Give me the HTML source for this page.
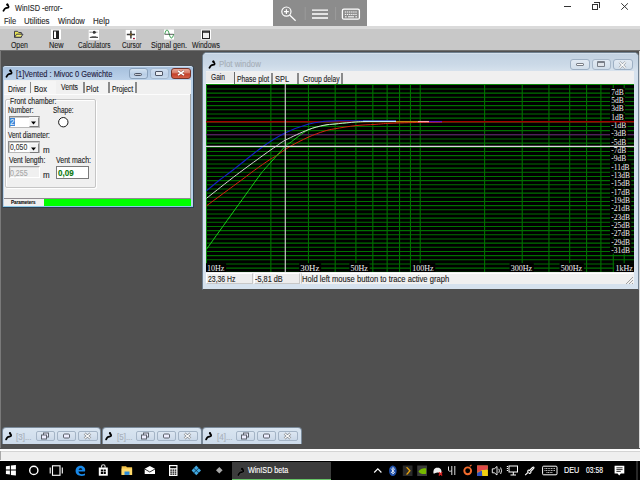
<!DOCTYPE html>
<html><head><meta charset="utf-8">
<style>
*{margin:0;padding:0;box-sizing:border-box}
html,body{width:640px;height:480px;overflow:hidden;background:#fff}
body{position:relative;font-family:"Liberation Sans",sans-serif;font-size:8px;color:#000}
.a{position:absolute}
.t{position:absolute;white-space:nowrap;line-height:1;font-size:8px;transform-origin:0 0;-webkit-text-stroke:0.12px currentColor}
.btn{position:absolute;border:1px solid #8fa3bb;border-radius:3px;background:linear-gradient(#e4edf6,#cbdaea)}
.sep{position:absolute;width:1.8px;background:#8a8a8a}
</style></head><body>
<!-- app title bar -->
<svg class="a" style="left:2px;top:3px" width="9" height="9" viewBox="0 0 9 9"><path d="M5.3 1.5 C5.6 2.5 7.2 3.2 6.4 4.3 C5.8 5 4.2 4.8 3.3 5.4 C2.5 6 2 7 1.5 7.8" stroke="#000" stroke-width="1.8" fill="none" stroke-linecap="round"/><circle cx="5.4" cy="1.7" r="1.15" fill="#000"/></svg>
<div class="t" style="font-size:8.5px;left:14.6px;top:4.0px;color:#2a2a2a;transform:scaleX(0.866)">WinISD -error-</div>
<div class="t" style="font-size:8.5px;left:3.7px;top:17.0px;color:#2a2a2a;transform:scaleX(0.885)">File</div>
<div class="t" style="font-size:8.5px;left:24px;top:17.0px;color:#2a2a2a;transform:scaleX(0.932)">Utilities</div>
<div class="t" style="font-size:8.5px;left:57.8px;top:17.0px;color:#2a2a2a;transform:scaleX(0.885)">Window</div>
<div class="t" style="font-size:8.5px;left:92.8px;top:17.0px;color:#2a2a2a;transform:scaleX(0.941)">Help</div>

<!-- window controls -->
<div class="a" style="left:564px;top:6px;width:7px;height:1px;background:#333"></div>
<div class="a" style="left:592px;top:4px;width:6px;height:6px;border:1px solid #333"></div>
<div class="a" style="left:594px;top:2px;width:6px;height:6px;border-top:1px solid #333;border-right:1px solid #333"></div>
<svg class="a" style="left:621px;top:3px" width="8" height="8"><path d="M0.3 0.3L6.9 6.7M6.9 0.3L0.3 6.7" stroke="#333" stroke-width="1"/></svg>

<!-- tablet overlay -->
<div class="a" style="left:273px;top:0;width:94px;height:26px;background:#8c8c8c"></div>
<svg class="a" style="left:273px;top:0" width="94" height="26">
 <circle cx="13.4" cy="11.6" r="4.6" stroke="#fff" stroke-width="1.2" fill="none"/>
 <path d="M11 11.6H15.8M13.4 9.2V14M16.6 15L22.6 20.8" stroke="#fff" stroke-width="1.2"/>
 <path d="M32.2 7V20M62.6 7V20" stroke="#9c9c9c" stroke-width="1"/>
 <path d="M39 10.2H55M39 14H55M39 18H55" stroke="#fff" stroke-width="1.3"/>
 <rect x="69.4" y="9.2" width="17" height="10" rx="1.5" stroke="#fff" stroke-width="1.3" fill="none"/>
 <path d="M71.8 12H84.2M71.8 14.4H84.2" stroke="#fff" stroke-width="1" stroke-dasharray="1.4 0.7"/>
 <path d="M72 16.8H73.6M75 16.8H81M82.4 16.8H84" stroke="#fff" stroke-width="1"/>
</svg>

<!-- toolbar -->
<div class="a" style="left:0;top:26px;width:640px;height:25px;background:#c8c8c8"></div>
<div class="a" style="left:0;top:26px;width:640px;height:3px;background:#dadada"></div>
<div class="a" style="left:0;top:50px;width:640px;height:1px;background:#6e6e6e"></div>
<svg class="a" style="left:0;top:0" width="230" height="42">
 <path d="M14.5 31.3h3l1.2 1.2h2.6v4.8h-6.8z" fill="#e8e450" stroke="#2c2c48" stroke-width="0.9"/>
 <path d="M14.6 37.2l2-3h6.4l-2 3z" fill="#f4f070" stroke="#2c2c48" stroke-width="0.9"/>
 <rect x="51" y="29.5" width="10" height="10" fill="#fff"/>
 <rect x="53.5" y="31" width="5" height="7.5" fill="#fff" stroke="#222" stroke-width="1"/>
 <rect x="56" y="31" width="2.5" height="7.5" fill="#222"/>
 <rect x="88.7" y="29.9" width="10.3" height="10" fill="#fff"/>
 <path d="M89.6 32.2H97.4" stroke="#555" stroke-width="0.9" stroke-dasharray="1.2 0.5"/>
 <circle cx="94.2" cy="32.2" r="1.5" fill="#333"/>
 <path d="M89.8 37.4H98" stroke="#444" stroke-width="1.1"/>
 <path d="M91.5 36.6H96.3" stroke="#666" stroke-width="0.9"/>
 <rect x="125.7" y="29.9" width="10.3" height="10" fill="#fff"/>
 <path d="M130.9 30.8V38.4M126.8 34.5H135" stroke="#3a3a3a" stroke-width="1.5"/>
 <circle cx="130.9" cy="34.5" r="1.2" fill="#6a5020"/>
 <rect x="133" y="37.9" width="1.9" height="1.3" fill="#a01838"/>
 <rect x="164" y="29.5" width="10" height="10" fill="#fff"/>
 <path d="M164.8 34C166.2 28.6 167.8 28.6 169.2 34S172.2 39.4 173.8 34" stroke="#3aa050" stroke-width="1" fill="none"/>
 <path d="M164.5 34.3H173.5" stroke="#333" stroke-width="0.8"/>
 <rect x="201" y="29.5" width="10" height="10" fill="#fff"/>
 <rect x="202.5" y="31" width="7" height="7.5" fill="#eee" stroke="#222" stroke-width="1"/>
 <path d="M202.5 32H209.5" stroke="#222" stroke-width="1.5"/>
</svg>
<div class="t" style="font-size:8.5px;left:10.9px;top:41.3px;color:#222;transform:scaleX(0.809)">Open</div>
<div class="t" style="font-size:8.5px;left:48.8px;top:41.3px;color:#222;transform:scaleX(0.856)">New</div>
<div class="t" style="font-size:8.5px;left:77.9px;top:41.3px;color:#222;transform:scaleX(0.762)">Calculators</div>
<div class="t" style="font-size:8.5px;left:121.6px;top:41.3px;color:#222;transform:scaleX(0.762)">Cursor</div>
<div class="t" style="font-size:8.5px;left:150.8px;top:41.3px;color:#222;transform:scaleX(0.847)">Signal gen.</div>
<div class="t" style="font-size:8.5px;left:192.2px;top:41.3px;color:#222;transform:scaleX(0.809)">Windows</div>

<!-- MDI area -->
<div class="a" style="left:0;top:51px;width:640px;height:397.5px;background:#505050"></div>
<div class="a" style="left:0;top:51px;width:1px;height:397px;background:#7a7a7a"></div>
<div class="a" style="left:638.5px;top:51px;width:1.5px;height:397px;background:#d8d8d8"></div>

<!-- child window [1]Vented -->
<div class="a" style="left:1.5px;top:64.5px;width:192.5px;height:143.5px;background:#b8d0e8;border:1px solid #2e3e4e;border-top-color:#484c50;border-left-color:#4a5a6a;border-radius:4px 4px 0 0"></div>
<div class="a" style="left:2.5px;top:65.5px;width:190.5px;height:14.5px;background:linear-gradient(#a6c0dd,#bcd2ea);border-radius:3px 3px 0 0;border-top:1px solid #d0e0f0"></div>
<div class="a" style="left:2.5px;top:205.5px;width:190.5px;height:1.5px;background:#8cc8e8"></div>
<div class="a" style="left:3.5px;top:80px;width:187.8px;height:125.5px;background:#f0f0f0"></div>
<svg class="a" style="left:4.5px;top:68.5px" width="9" height="9" viewBox="0 0 9 9"><path d="M5.3 1.5 C5.6 2.5 7.2 3.2 6.4 4.3 C5.8 5 4.2 4.8 3.3 5.4 C2.5 6 2 7 1.5 7.8" stroke="#000" stroke-width="1.8" fill="none" stroke-linecap="round"/><circle cx="5.4" cy="1.7" r="1.15" fill="#000"/></svg>
<div class="t" style="font-size:8.5px;left:16px;top:70.0px;color:#1e2040;transform:scaleX(0.875)">[1]Vented : Mivoc 0 Gewichte</div>
<div class="btn" style="left:128.5px;top:67.5px;width:19px;height:11px;border-color:#8aa2bc;background:linear-gradient(#d4e3f2,#bed2e8 50%,#b4cae4 51%,#c8daee)"></div>
<div class="btn" style="left:149.5px;top:67.5px;width:19px;height:11px;border-color:#a6bad0;background:linear-gradient(#d0dff0,#c2d4ea 50%,#bcd0e8 51%,#cadcee)"></div>
<div class="btn" style="left:170.5px;top:67.5px;width:20px;height:11px;border-color:#7a3428;background:linear-gradient(#eaa898 0%,#d8806c 40%,#c4402a 55%,#d46048 100%)"></div>
<div class="a" style="left:134px;top:72.5px;width:7.5px;height:3px;border:1px solid #4e5666;border-radius:1.5px;background:#c8ccd4"></div>
<div class="a" style="left:155px;top:70.5px;width:7.5px;height:5px;border:1px solid #4e5666;border-radius:1px;background:#e8ecf2;border-top-width:1.5px"></div>
<svg class="a" style="left:176.5px;top:70px" width="8" height="6"><path d="M1 0.8L7 5.2M7 0.8L1 5.2" stroke="#5a2a22" stroke-width="2.6" opacity=".5"/><path d="M1 0.8L7 5.2M7 0.8L1 5.2" stroke="#fff" stroke-width="1.6"/></svg>
<!-- tabs -->
<div class="a" style="left:4px;top:81px;width:26px;height:13px;background:#f3f3f3"></div>
<div class="a" style="left:31px;top:81px;width:24.5px;height:13px;background:#f5f5f5"></div>
<div class="a" style="left:85px;top:81px;width:23px;height:13px;background:#f3f3f3"></div>
<div class="a" style="left:110px;top:81px;width:25px;height:13px;background:#f3f3f3"></div>
<div class="sep" style="left:29.5px;top:81.5px;height:11.5px"></div>
<div class="sep" style="left:82.8px;top:81.5px;height:11.5px"></div>
<div class="sep" style="left:108px;top:81.5px;height:11.5px"></div>
<div class="sep" style="left:135px;top:81.5px;height:11.5px"></div>
<div class="t" style="font-size:8.5px;left:7.6px;top:84.5px;color:#222;transform:scaleX(0.800)">Driver</div>
<div class="t" style="font-size:8.5px;left:33.8px;top:84.5px;color:#222;transform:scaleX(0.885)">Box</div>
<div class="t" style="font-size:8.5px;left:60.5px;top:82.5px;color:#222;transform:scaleX(0.800)">Vents</div>
<div class="t" style="font-size:8.5px;left:85.9px;top:84.8px;color:#222;transform:scaleX(0.847)">Plot</div>
<div class="t" style="font-size:8.5px;left:112.4px;top:84.8px;color:#222;transform:scaleX(0.800)">Project</div>
<div class="a" style="left:3.5px;top:93.5px;width:187.5px;height:0.8px;background:#d8d8d8"></div>
<div class="a" style="left:3.5px;top:94.3px;width:187px;height:0.8px;background:#fcfcfc"></div>
<div class="a" style="left:190.2px;top:93.5px;width:1.1px;height:104px;background:#a4a4a4"></div>
<!-- group box -->
<div class="a" style="left:5px;top:99.3px;width:91px;height:88.8px;border:1px solid #c6c6c6;border-radius:2px;box-shadow:inset 1px 1px 0 #fff,1px 1px 0 #fff"></div>
<div class="a" style="left:10px;top:97px;width:46px;height:7px;background:#f0f0f0"></div>
<div class="t" style="font-size:8.5px;left:10.2px;top:96.8px;color:#222;transform:scaleX(0.807)">Front chamber:</div>
<div class="t" style="font-size:8.5px;left:7.8px;top:106.0px;color:#222;transform:scaleX(0.785)">Number:</div>
<div class="t" style="font-size:8.5px;left:53.2px;top:106.0px;color:#222;transform:scaleX(0.762)">Shape:</div>
<!-- combo 1 -->
<div class="a" style="left:8.5px;top:115.5px;width:31.5px;height:12px;background:#fff;border:1px solid;border-color:#8a8a8a #b8b8b8 #b8b8b8 #8a8a8a;box-shadow:inset 1px 1px 0 #c8c8c8"></div>
<div class="a" style="left:10px;top:117.5px;width:4.5px;height:8px;background:#3d86d8"></div>
<div class="t" style="font-size:8.5px;left:10px;top:117.8px;color:#dfeefe;transform:scaleX(0.941)">2</div>
<div class="a" style="left:28.5px;top:117px;width:10px;height:10px;background:#f2f2f2;border:1px solid;border-color:#f8f8f8 #8a8a8a #7a7a7a #f8f8f8"></div>
<svg class="a" style="left:31px;top:121px" width="6" height="4"><path d="M0 0.5H5L2.5 3.5z" fill="#000"/></svg>
<circle></circle>
<svg class="a" style="left:57px;top:115.5px" width="13" height="13"><circle cx="6.3" cy="6.2" r="4.7" fill="#fff" stroke="#1a1a1a" stroke-width="1"/></svg>
<div class="t" style="font-size:8.5px;left:8px;top:131.0px;color:#222;transform:scaleX(0.764)">Vent diameter:</div>
<!-- combo 2 -->
<div class="a" style="left:8px;top:141px;width:32px;height:11.5px;background:#fff;border:1px solid;border-color:#8a8a8a #b8b8b8 #b8b8b8 #8a8a8a;box-shadow:inset 1px 1px 0 #c8c8c8"></div>
<div class="t" style="font-size:8.5px;left:10.3px;top:143.3px;color:#333;transform:scaleX(0.809)">0,050</div>
<div class="a" style="left:28.5px;top:142.5px;width:10px;height:10px;background:#f2f2f2;border:1px solid;border-color:#f8f8f8 #8a8a8a #7a7a7a #f8f8f8"></div>
<svg class="a" style="left:31px;top:146.5px" width="6" height="4"><path d="M0 0.5H5L2.5 3.5z" fill="#000"/></svg>
<div class="t" style="font-size:8.5px;left:42.8px;top:146.0px;color:#222;transform:scaleX(0.941)">m</div>
<div class="t" style="font-size:8.5px;left:8.6px;top:156.2px;color:#222;transform:scaleX(0.809)">Vent length:</div>
<div class="t" style="font-size:8.5px;left:56px;top:156.2px;color:#222;transform:scaleX(0.822)">Vent mach:</div>
<div class="a" style="left:8.5px;top:165.5px;width:31.5px;height:12px;background:#f0f0f0;border:1px solid;border-color:#a0a0a0 #fff #fff #a0a0a0;box-shadow:inset 1px 1px 0 #dcdcdc"></div>
<div class="t" style="font-size:8.5px;left:10px;top:169.0px;color:#a8a8a8;transform:scaleX(0.828)">0,255</div>
<div class="t" style="font-size:8.5px;left:42.8px;top:170.5px;color:#222;transform:scaleX(0.941)">m</div>
<div class="a" style="left:55.5px;top:165.5px;width:33.5px;height:13px;background:#fff;border:1px solid #7a7a7a"></div>
<div class="t" style="left:57.5px;top:168.5px;font-size:9px;font-weight:bold;color:#0a780a;transform:scaleX(.894)">0,09</div>
<!-- status -->
<div class="a" style="left:3.5px;top:197.6px;width:187.8px;height:1px;background:#8e8a90"></div>
<div class="a" style="left:43.6px;top:198.8px;width:147.7px;height:6.8px;background:#00ff00"></div>
<div class="t" style="left:11px;top:200px;font-size:5px;color:#111;font-weight:bold;transform:scaleX(.9)">Parameters</div>

<!-- plot window -->
<div class="a" style="left:201.5px;top:51.5px;width:437px;height:238px;background:#d6e2ee;border:1px solid #6f8090;border-bottom-color:#505050;border-radius:5px 5px 0 0"></div>
<div class="a" style="left:202.5px;top:52.5px;width:435px;height:19px;background:linear-gradient(#dce6f0 0,#c3d2e2 8%,#cbd9e7 60%,#d8e3ee 100%);border-radius:4px 4px 0 0"></div>
<div class="a" style="left:206px;top:71.3px;width:428px;height:213px;background:#f0f0f0"></div>
<svg class="a" style="left:207.5px;top:59.5px" width="9" height="9" viewBox="0 0 9 9"><path d="M5.3 1.5 C5.6 2.5 7.2 3.2 6.4 4.3 C5.8 5 4.2 4.8 3.3 5.4 C2.5 6 2 7 1.5 7.8" stroke="#000" stroke-width="1.8" fill="none" stroke-linecap="round"/><circle cx="5.4" cy="1.7" r="1.15" fill="#000"/></svg>
<div class="t" style="font-size:8.5px;left:219.2px;top:60.0px;color:#a7afb8;transform:scaleX(0.922)">Plot window</div>
<div class="btn" style="left:570px;top:58.5px;width:19.5px;height:11px;background:linear-gradient(#e2eaf3,#d2deea);border-color:#9eb0c4"></div>
<div class="btn" style="left:591.5px;top:58.5px;width:19px;height:11px;background:linear-gradient(#e2eaf3,#d2deea);border-color:#a8b8ca"></div>
<div class="btn" style="left:612.5px;top:58.5px;width:20px;height:11px;background:linear-gradient(#e2eaf3,#d2deea);border-color:#9eb0c4"></div>
<div class="a" style="left:576px;top:63px;width:8px;height:3px;border:1px solid #7a7f88;border-radius:1px;background:#fafafa"></div>
<div class="a" style="left:597px;top:61px;width:8px;height:6px;border:1px solid #7a7f88;border-radius:1px;background:#e0e4ea;border-top-width:2px"></div>
<svg class="a" style="left:618px;top:60.5px" width="9" height="8"><path d="M1.5 1L7.5 7M7.5 1L1.5 7" stroke="#8a9098" stroke-width="2.4"/><path d="M1.5 1L7.5 7M7.5 1L1.5 7" stroke="#fff" stroke-width="1.2"/></svg>
<!-- tabs -->
<div class="a" style="left:206px;top:71.5px;width:28px;height:12.5px;background:#ebebeb;border-bottom:1px solid #fff"></div>
<div class="a" style="left:234px;top:72px;width:1px;height:12px;background:#6a6a6a"></div>
<div class="sep" style="left:271px;top:73px;height:10.5px"></div>
<div class="sep" style="left:297px;top:73px;height:10.5px"></div>
<div class="sep" style="left:341px;top:73px;height:10.5px"></div>
<div class="t" style="font-size:8.5px;left:211.3px;top:73.2px;color:#222;transform:scaleX(0.781)">Gain</div>
<div class="t" style="font-size:8.5px;left:237px;top:75.2px;color:#222;transform:scaleX(0.801)">Phase plot</div>
<div class="t" style="font-size:8.5px;left:275px;top:75.2px;color:#222;transform:scaleX(0.874)">SPL</div>
<div class="t" style="font-size:8.5px;left:302.8px;top:75.2px;color:#222;transform:scaleX(0.788)">Group delay</div>
<svg width="428" height="188" viewBox="0 0 428 188" style="position:absolute;left:206px;top:84px">
<rect width="428" height="188" fill="#000"/>
<path d="M0 4.97H428 M0 9.13H428 M0 13.30H428 M0 17.47H428 M0 21.63H428 M0 25.80H428 M0 29.97H428 M0 34.13H428 M0 38.30H428 M0 42.47H428 M0 46.63H428 M0 50.80H428 M0 54.97H428 M0 59.13H428 M0 63.30H428 M0 67.47H428 M0 71.63H428 M0 75.80H428 M0 79.97H428 M0 84.13H428 M0 88.30H428 M0 92.47H428 M0 96.63H428 M0 100.80H428 M0 104.97H428 M0 109.13H428 M0 113.30H428 M0 117.47H428 M0 121.63H428 M0 125.80H428 M0 129.97H428 M0 134.13H428 M0 138.30H428 M0 142.47H428 M0 146.63H428 M0 150.80H428 M0 154.97H428 M0 159.13H428 M0 163.30H428 M0 167.47H428 M0 171.63H428 M0 175.80H428 M0 179.97H428 M0 184.13H428 M0 188.30H428 M64.85 0V188 M102.48 0V188 M129.19 0V188 M149.90 0V188 M166.83 0V188 M181.14 0V188 M193.54 0V188 M204.47 0V188 M214.25 0V188 M278.60 0V188 M316.23 0V188 M342.94 0V188 M363.65 0V188 M380.58 0V188 M394.89 0V188 M407.29 0V188 M418.22 0V188" stroke="#007000" stroke-width="1.1" fill="none"/>
<path d="M0.5 188V0.5H428" fill="none" stroke="#0a8a0a" stroke-width="1"/>
<path d="M0 50.80H428" stroke="#6a0c7a" stroke-width="1.1"/>
<g fill="#000">
<rect x="404" y="4.23" width="15.00" height="7.2"/>
<rect x="404" y="12.57" width="15.00" height="7.2"/>
<rect x="404" y="20.90" width="15.00" height="7.2"/>
<rect x="404" y="29.23" width="15.00" height="7.2"/>
<rect x="404" y="37.57" width="17.50" height="7.2"/>
<rect x="404" y="45.90" width="17.50" height="7.2"/>
<rect x="404" y="54.23" width="17.50" height="7.2"/>
<rect x="404" y="62.57" width="17.50" height="7.2"/>
<rect x="404" y="70.90" width="17.50" height="7.2"/>
<rect x="404" y="79.23" width="21.25" height="7.2"/>
<rect x="404" y="87.57" width="21.25" height="7.2"/>
<rect x="404" y="95.90" width="21.25" height="7.2"/>
<rect x="404" y="104.23" width="21.25" height="7.2"/>
<rect x="404" y="112.57" width="21.25" height="7.2"/>
<rect x="404" y="120.90" width="21.25" height="7.2"/>
<rect x="404" y="129.23" width="21.25" height="7.2"/>
<rect x="404" y="137.57" width="21.25" height="7.2"/>
<rect x="404" y="145.90" width="21.25" height="7.2"/>
<rect x="404" y="154.23" width="21.25" height="7.2"/>
<rect x="404" y="162.57" width="21.25" height="7.2"/>
<rect x="-0.20" y="179.2" width="20.33" height="9"/>
<rect x="93.10" y="179.2" width="22.06" height="9"/>
<rect x="143.30" y="179.2" width="20.33" height="9"/>
<rect x="205.00" y="179.2" width="24.33" height="9"/>
<rect x="303.50" y="179.2" width="24.33" height="9"/>
<rect x="353.50" y="179.2" width="24.33" height="9"/>
<rect x="408.30" y="179.2" width="20.33" height="9"/>
</g>
<g font-family="Liberation Serif" font-size="8.6" fill="#f2f2f2">
<text transform="translate(405.2 10.53) scale(.87 1)">7dB</text>
<text transform="translate(405.2 18.87) scale(.87 1)">5dB</text>
<text transform="translate(405.2 27.20) scale(.87 1)">3dB</text>
<text transform="translate(405.2 35.53) scale(.87 1)">1dB</text>
<text transform="translate(405.2 43.87) scale(.87 1)">-1dB</text>
<text transform="translate(405.2 52.20) scale(.87 1)">-3dB</text>
<text transform="translate(405.2 60.53) scale(.87 1)">-5dB</text>
<text transform="translate(405.2 68.87) scale(.87 1)">-7dB</text>
<text transform="translate(405.2 77.20) scale(.87 1)">-9dB</text>
<text transform="translate(405.2 85.53) scale(.87 1)">-11dB</text>
<text transform="translate(405.2 93.87) scale(.87 1)">-13dB</text>
<text transform="translate(405.2 102.20) scale(.87 1)">-15dB</text>
<text transform="translate(405.2 110.53) scale(.87 1)">-17dB</text>
<text transform="translate(405.2 118.87) scale(.87 1)">-19dB</text>
<text transform="translate(405.2 127.20) scale(.87 1)">-21dB</text>
<text transform="translate(405.2 135.53) scale(.87 1)">-23dB</text>
<text transform="translate(405.2 143.87) scale(.87 1)">-25dB</text>
<text transform="translate(405.2 152.20) scale(.87 1)">-27dB</text>
<text transform="translate(405.2 160.53) scale(.87 1)">-29dB</text>
<text transform="translate(405.2 168.87) scale(.87 1)">-31dB</text>
</g>
<g font-family="Liberation Serif" font-size="8" fill="#f2f2f2">
<text transform="translate(1.00 187.4) scale(1.0 1)">10Hz</text>
<text transform="translate(94.30 187.4) scale(1.1 1)">30Hz</text>
<text transform="translate(144.50 187.4) scale(1.0 1)">50Hz</text>
<text transform="translate(206.20 187.4) scale(1.0 1)">100Hz</text>
<text transform="translate(304.70 187.4) scale(1.0 1)">300Hz</text>
<text transform="translate(354.70 187.4) scale(1.0 1)">500Hz</text>
<text transform="translate(409.50 187.4) scale(1.0 1)">1kHz</text>
</g>
<path d="M0 37.80H428" stroke="#a00000" stroke-width="1.6"/>
<path d="M0.50 121.80 C6.33 117.50 27.45 101.97 35.50 96.00 C43.55 90.03 44.18 89.33 48.80 86.00 C53.42 82.67 59.68 78.33 63.20 76.00 C66.72 73.67 66.43 74.25 69.90 72.00 C73.37 69.75 78.65 65.62 84.00 62.50 C89.35 59.38 96.33 55.84 102.00 53.30 C107.67 50.76 113.50 48.68 118.00 47.25 C122.50 45.82 123.67 45.69 129.00 44.75 C134.33 43.81 143.33 42.32 150.00 41.60 C156.67 40.87 163.33 40.78 169.00 40.40 C174.67 40.02 176.50 39.63 184.00 39.30 C191.50 38.97 205.33 38.62 214.00 38.40 C222.67 38.18 232.33 38.07 236.00 38.00" stroke="#d82010" stroke-width="1" fill="none"/>
<path d="M0.50 106.80 C2.68 105.00 9.18 99.47 13.60 96.00 C18.02 92.53 19.60 91.70 27.00 86.00 C34.40 80.30 49.25 68.02 58.00 61.80 C66.75 55.58 72.17 52.30 79.50 48.70 C86.83 45.10 95.58 42.08 102.00 40.20 C108.42 38.32 112.67 37.97 118.00 37.40 C123.33 36.83 122.00 36.90 134.00 36.80 C146.00 36.70 180.67 36.80 190.00 36.80" stroke="#1422c8" stroke-width="1.1" fill="none"/>
<path d="M0.50 165.20 C8.80 153.67 40.72 109.20 50.30 96.00 C59.88 82.80 55.23 89.33 58.00 86.00 C60.77 82.67 63.36 79.96 66.90 76.00 C70.44 72.04 76.40 65.12 79.25 62.25 C82.10 59.38 80.21 61.51 84.00 58.80 C87.79 56.09 96.33 48.87 102.00 46.00 C107.67 43.13 113.50 42.60 118.00 41.60 C122.50 40.60 124.67 40.52 129.00 40.00 C133.33 39.48 139.33 38.90 144.00 38.50 C148.67 38.10 154.83 37.75 157.00 37.60" stroke="#18d018" stroke-width="1" fill="none"/>
<path d="M0.50 114.30 C4.38 111.25 17.72 100.72 23.80 96.00 C29.88 91.28 31.30 90.22 37.00 86.00 C42.70 81.78 52.47 74.67 58.00 70.70 C63.53 66.73 66.62 64.63 70.20 62.20 C73.78 59.77 74.20 58.83 79.50 56.10 C84.80 53.37 95.58 48.28 102.00 45.80 C108.42 43.32 113.50 42.17 118.00 41.20 C122.50 40.23 124.67 40.45 129.00 40.00 C133.33 39.55 139.33 38.90 144.00 38.50 C148.67 38.10 149.33 37.77 157.00 37.60 C164.67 37.43 184.50 37.52 190.00 37.50" stroke="#d4d4d4" stroke-width="1" fill="none"/>
<path d="M189 37.599999999999994H212" stroke="#c08010" stroke-width="1.3"/>
<path d="M212 37.599999999999994H223" stroke="#ffa0b0" stroke-width="1.3"/>
<path d="M223 37.599999999999994H236" stroke="#6010c0" stroke-width="1.3"/>
<path d="M157 37.3H190" stroke="#c0f0f0" stroke-width="1.3"/>
<path d="M79.30 0V188" stroke="#c8c8c8" stroke-width="1.2"/>
<path d="M0 62.40H428" stroke="#d8d8d8" stroke-width="1.2"/>
</svg>
<!-- status bar -->
<div class="a" style="left:206px;top:272.5px;width:46.5px;height:11.5px;border:1px solid;border-color:#fff #c8c8c8 #c8c8c8 #fff;background:#ededed"></div>
<div class="a" style="left:253.5px;top:272.5px;width:46px;height:11.5px;border:1px solid;border-color:#fff #c8c8c8 #c8c8c8 #fff;background:#ededed"></div>
<div class="a" style="left:301px;top:272.5px;width:333px;height:11.5px;border:1px solid;border-color:#fff #f0f0f0 #f0f0f0 #c8c8c8;background:#f0f0f0"></div>
<div class="t" style="font-size:8.5px;left:207.5px;top:274.8px;color:#222;transform:scaleX(0.808)">23,36 Hz</div>
<div class="t" style="font-size:8.5px;left:255px;top:274.8px;color:#222;transform:scaleX(0.863)">-5,81 dB</div>
<div class="t" style="font-size:8.5px;left:302.2px;top:274.8px;color:#222;transform:scaleX(0.895)">Hold left mouse button to trace active graph</div>
<svg class="a" style="left:625px;top:276px" width="9" height="9"><path d="M8 1L1 8M8 4L4 8M8 7L7 8" stroke="#a0a0a0" stroke-width="1"/></svg>

<!-- minimized windows -->
<div class="a" style="left:1.5px;top:427px;width:99.5px;height:16.6px;background:linear-gradient(#d9e5f1,#cddbea);border:1px solid #7a8a9a;border-bottom:none;border-radius:4px 4px 0 0"></div>
<div class="a" style="left:102px;top:427px;width:99.5px;height:16.6px;background:linear-gradient(#d9e5f1,#cddbea);border:1px solid #7a8a9a;border-bottom:none;border-radius:4px 4px 0 0"></div>
<div class="a" style="left:202px;top:427px;width:99.5px;height:16.6px;background:linear-gradient(#d9e5f1,#cddbea);border:1px solid #7a8a9a;border-bottom:none;border-radius:4px 4px 0 0"></div>
<svg class="a" style="left:0;top:420px" width="310" height="28">
<g transform="translate(4.6 11.6)"><path d="M5.3 1.5 C5.6 2.5 7.2 3.2 6.4 4.3 C5.8 5 4.2 4.8 3.3 5.4 C2.5 6 2 7 1.5 7.8" stroke="#000" stroke-width="1.8" fill="none" stroke-linecap="round"/><circle cx="5.4" cy="1.7" r="1.15" fill="#000"/></g><g transform="translate(104.6 11.6)"><path d="M5.3 1.5 C5.6 2.5 7.2 3.2 6.4 4.3 C5.8 5 4.2 4.8 3.3 5.4 C2.5 6 2 7 1.5 7.8" stroke="#000" stroke-width="1.8" fill="none" stroke-linecap="round"/><circle cx="5.4" cy="1.7" r="1.15" fill="#000"/></g><g transform="translate(204.6 11.6)"><path d="M5.3 1.5 C5.6 2.5 7.2 3.2 6.4 4.3 C5.8 5 4.2 4.8 3.3 5.4 C2.5 6 2 7 1.5 7.8" stroke="#000" stroke-width="1.8" fill="none" stroke-linecap="round"/><circle cx="5.4" cy="1.7" r="1.15" fill="#000"/></g>
</svg>
<div class="t" style="font-size:8.5px;left:16px;top:432.5px;color:#a8b0ba;transform:scaleX(0.941)">[3]...</div>
<div class="t" style="font-size:8.5px;left:116.5px;top:432.5px;color:#a8b0ba;transform:scaleX(0.941)">[5]...</div>
<div class="t" style="font-size:8.5px;left:216.5px;top:432.5px;color:#a8b0ba;transform:scaleX(0.941)">[4]...</div>
<!-- buttons -->
<div class="btn" style="border-radius:2px;left:35.5px;top:430.5px;width:19.5px;height:10.5px;background:linear-gradient(#dde7f2,#cad8e8);border-color:#a4b4c6"></div>
<div class="btn" style="border-radius:2px;left:57.2px;top:430.5px;width:19px;height:10.5px;background:linear-gradient(#dde7f2,#cad8e8);border-color:#a4b4c6"></div>
<div class="btn" style="border-radius:2px;left:78px;top:430.5px;width:19.5px;height:10.5px;background:linear-gradient(#dde7f2,#cad8e8);border-color:#a4b4c6"></div>
<div class="btn" style="border-radius:2px;left:135.5px;top:430.5px;width:19.5px;height:10.5px;background:linear-gradient(#dde7f2,#cad8e8);border-color:#a4b4c6"></div>
<div class="btn" style="border-radius:2px;left:157.2px;top:430.5px;width:19px;height:10.5px;background:linear-gradient(#dde7f2,#cad8e8);border-color:#a4b4c6"></div>
<div class="btn" style="border-radius:2px;left:178px;top:430.5px;width:19.5px;height:10.5px;background:linear-gradient(#dde7f2,#cad8e8);border-color:#a4b4c6"></div>
<div class="btn" style="border-radius:2px;left:235.5px;top:430.5px;width:19.5px;height:10.5px;background:linear-gradient(#dde7f2,#cad8e8);border-color:#a4b4c6"></div>
<div class="btn" style="border-radius:2px;left:257.2px;top:430.5px;width:19px;height:10.5px;background:linear-gradient(#dde7f2,#cad8e8);border-color:#a4b4c6"></div>
<div class="btn" style="border-radius:2px;left:278px;top:430.5px;width:19.5px;height:10.5px;background:linear-gradient(#dde7f2,#cad8e8);border-color:#a4b4c6"></div>
<svg class="a" style="left:0;top:420px" width="310" height="28">
 <g>
  <rect x="43.5" y="13" width="5" height="4" fill="#eef" stroke="#5a606a" stroke-width="1"/>
  <rect x="41.5" y="15" width="5" height="4" fill="#eef" stroke="#5a606a" stroke-width="1"/>
  <rect x="63.5" y="14" width="6" height="4" rx="1" fill="#eef" stroke="#5a606a" stroke-width="1"/>
  <path d="M84.5 13.5L90.5 18.5M90.5 13.5L84.5 18.5" stroke="#7a8088" stroke-width="2.4"/>
  <path d="M84.5 13.5L90.5 18.5M90.5 13.5L84.5 18.5" stroke="#fff" stroke-width="1.1"/>
 </g>
 <g transform="translate(100 0)">
  <rect x="43.5" y="13" width="5" height="4" fill="#eef" stroke="#5a606a" stroke-width="1"/>
  <rect x="41.5" y="15" width="5" height="4" fill="#eef" stroke="#5a606a" stroke-width="1"/>
  <rect x="63.5" y="14" width="6" height="4" rx="1" fill="#eef" stroke="#5a606a" stroke-width="1"/>
  <path d="M84.5 13.5L90.5 18.5M90.5 13.5L84.5 18.5" stroke="#7a8088" stroke-width="2.4"/>
  <path d="M84.5 13.5L90.5 18.5M90.5 13.5L84.5 18.5" stroke="#fff" stroke-width="1.1"/>
 </g>
 <g transform="translate(200 0)">
  <rect x="43.5" y="13" width="5" height="4" fill="#eef" stroke="#5a606a" stroke-width="1"/>
  <rect x="41.5" y="15" width="5" height="4" fill="#eef" stroke="#5a606a" stroke-width="1"/>
  <rect x="63.5" y="14" width="6" height="4" rx="1" fill="#eef" stroke="#5a606a" stroke-width="1"/>
  <path d="M84.5 13.5L90.5 18.5M90.5 13.5L84.5 18.5" stroke="#7a8088" stroke-width="2.4"/>
  <path d="M84.5 13.5L90.5 18.5M90.5 13.5L84.5 18.5" stroke="#fff" stroke-width="1.1"/>
 </g>
</svg>


<!-- strip + taskbar -->
<div class="a" style="left:0;top:448.5px;width:640px;height:12.5px;background:#efefef"></div>
<div class="a" style="left:0;top:448.5px;width:640px;height:2.7px;background:#fdfdfd"></div>
<div class="a" style="left:0;top:451.2px;width:640px;height:0.8px;background:#d4d4d4"></div>
<div class="a" style="left:0;top:459.8px;width:640px;height:1.2px;background:#fcfcfc"></div>
<div class="a" style="left:0;top:451px;width:1px;height:9px;background:#a8a8a8"></div>
<!-- taskbar -->
<div class="a" style="left:0;top:461px;width:640px;height:19px;background:#000"></div>
<div class="a" style="left:231.5px;top:461.5px;width:99.5px;height:18.5px;background:#3c3c3c"></div>
<div class="a" style="left:231.5px;top:478.5px;width:99.5px;height:1.5px;background:#66c466"></div>
<svg class="a" style="left:0;top:461px" width="640" height="19">
 <!-- start -->
 <path d="M5.9 5.2L9.9 4.7V8.6H5.9z M10.9 4.5L15.9 3.9V8.6H10.9z M5.9 9.6H9.9V13.5L5.9 13z M10.9 9.6H15.9V14.6L10.9 14z" fill="#fff"/>
 <!-- cortana -->
 <circle cx="33.8" cy="9.4" r="4.1" stroke="#fff" stroke-width="1.4" fill="none"/>
 <!-- task view -->
 <rect x="52.5" y="4.8" width="7.5" height="9.5" stroke="#fff" stroke-width="1.1" fill="none"/>
 <path d="M50.2 6.5V12.5M62.3 6.5V12.5" stroke="#fff" stroke-width="1.1"/>
 <!-- edge -->
 <path d="M85 10.6H78.4C78.6 13.2 82.2 13.9 85 12.4V14.2C81.5 15.8 75.6 14.8 75.6 10C75.6 5.5 79.8 4 82.8 5.2C85 6.2 85.6 8.6 85 10.6z M78.6 8.8H82.4C82.2 6.6 78.9 6.6 78.6 8.8z" fill="#1888e8"/>
 <!-- store -->
 <path d="M98.8 6.5H107.8V14.7H98.8z" fill="#fff"/>
 <path d="M101.5 6.8V5.6A1.8 1.8 0 0 1 105.1 5.6V6.8" stroke="#ddd" stroke-width="1.1" fill="none"/>
 <path d="M100.8 8.6h2.2v2h-2.2zM103.6 8.6h2.2v2h-2.2zM100.8 11.1h2.2v2h-2.2zM103.6 11.1h2.2v2h-2.2z" fill="#000"/>
 <!-- explorer -->
 <path d="M121.6 5.2H126L127 6.3H132.1V13.9H121.6z" fill="#f2c14a"/>
 <path d="M121.6 7.5H132.1V13.9H121.6z" fill="#ffd96a"/>
 <path d="M124.5 10.5H129.5V13.9H124.5z" fill="#2a8ad8"/>
 <!-- mail -->
 <path d="M144.7 7.8L149.8 5L155 7.8V13H144.7z" fill="#fff"/>
 <path d="M144.7 8L149.8 11L155 8" stroke="#000" stroke-width="0.8" fill="none"/>
 <!-- calculator -->
 <rect x="169" y="4" width="8.5" height="11" fill="#fff"/>
 <rect x="170.2" y="5.2" width="6.1" height="2" fill="#000"/>
 <path d="M170.3 8.6h1.6v1.2h-1.6zM172.5 8.6h1.6v1.2h-1.6zM174.7 8.6h1.6v1.2h-1.6zM170.3 10.6h1.6v1.2h-1.6zM172.5 10.6h1.6v1.2h-1.6zM174.7 10.6h1.6v1.2h-1.6zM170.3 12.6h1.6v1.2h-1.6zM172.5 12.6h1.6v1.2h-1.6zM174.7 12.6h1.6v1.2h-1.6z" fill="#000"/>
 <!-- kodi -->
 <path d="M196.3 4.5L201 9.5L196.3 14.3L191.6 9.5z" fill="#40a8e0"/>
 <path d="M193.5 7L199 12.2M199 6.8L193.5 12.2" stroke="#0a2a40" stroke-width="0.8"/>
 <!-- diamond -->
 <path d="M219.3 6L222.6 9.3L219.3 12.6L216 9.3z" fill="#a8a8a8"/>
 <!-- winisd icon -->
 <g transform="translate(236.8 6.2)"><path d="M5.3 1.5 C5.6 2.5 7.2 3.2 6.4 4.3 C5.8 5 4.2 4.8 3.3 5.4 C2.5 6 2 7 1.5 7.8" stroke="#777" stroke-width="2.6" fill="none" stroke-linecap="round" opacity=".35"/><path d="M5.3 1.5 C5.6 2.5 7.2 3.2 6.4 4.3 C5.8 5 4.2 4.8 3.3 5.4 C2.5 6 2 7 1.5 7.8" stroke="#000" stroke-width="1.8" fill="none" stroke-linecap="round"/><circle cx="5.4" cy="1.7" r="1.15" fill="#000"/></g>
 <!-- tray chevron -->
 <path d="M374.2 11.5L377.8 7.8L381.4 11.5" stroke="#fff" stroke-width="1.1" fill="none"/>
 <!-- bluetooth -->
 <ellipse cx="392.8" cy="9.8" rx="3.8" ry="5.3" fill="#1f4fa8"/>
 <path d="M391 7.5L394.5 11.5L392.8 13V6.5L394.5 8L391 12" stroke="#fff" stroke-width="0.8" fill="none"/>
 <!-- plex -->
 <rect x="402.8" y="4.5" width="9.7" height="10.5" fill="#2a2a2a"/>
 <path d="M405.8 6.2L409 9.8L405.8 13.4H407.6L410.8 9.8L407.6 6.2z" fill="#e5a00d"/>
 <!-- nvidia -->
 <rect x="417.2" y="4.5" width="9.8" height="10.5" fill="#3a3a3a"/>
 <path d="M418.5 10.5C420.5 7 424.5 6.8 426.2 7.5V12.8C423 13.5 420 12.8 418.5 10.5z" fill="#76b900"/>
 <!-- gamepad -->
 <path d="M433.5 12.5C433 9 434.5 6.5 437.5 6.8C440.5 6.5 442 9 441.5 12.5C440.5 13 439.5 11.5 437.5 11.5C435.5 11.5 434.5 13 433.5 12.5z" fill="#eee"/>
 <path d="M438.8 11.2L442.2 14.5M442.2 11.2L438.8 14.5" stroke="#e02020" stroke-width="1.2"/>
 <!-- ч| -->
 <path d="M448.5 5.5V9C448.5 10.5 450.3 10.5 451.8 9.8M451.8 5V14M454.8 5V14" stroke="#ddd" stroke-width="1" fill="none"/>
 <!-- origin -->
 <circle cx="467.7" cy="9.8" r="3.4" stroke="#f56c2d" stroke-width="1.9" fill="none"/>
 <path d="M469.8 5.2L471.5 4" stroke="#f56c2d" stroke-width="1.2"/>
 <!-- colorful -->
 <rect x="477.1" y="4.5" width="10.7" height="10.5" fill="#c8a030"/>
 <path d="M477.1 4.5H487.8V8L477.1 11z" fill="#e04848"/>
 <path d="M481 9H487.8V15H483z" fill="#f0d010"/>
 <path d="M477.1 12L482 9.5V15H477.1z" fill="#3050c0"/>
 <!-- volume -->
 <path d="M492.3 7.8H494.3L497 5.5V14L494.3 11.8H492.3z" stroke="#fff" stroke-width="0.9" fill="none"/>
 <path d="M498.8 7.8Q500 9.8 498.8 11.8M500.6 6.5Q502.6 9.8 500.6 13" stroke="#fff" stroke-width="0.9" fill="none"/>
 <!-- network -->
 <rect x="509" y="5" width="8.5" height="6" stroke="#fff" stroke-width="1" fill="none"/>
 <path d="M513.3 11V14M510.5 14H516M506.8 5.5H508M506.8 7.5H508M506.8 9.5H508" stroke="#fff" stroke-width="1"/>
 <!-- pen -->
 <path d="M525.2 14.2L528.2 11.2C527 10 528.2 8.5 529.5 9.5L532.5 6.5C533.5 5.5 534.5 6.5 533.7 7.5L530.7 10.5C531.5 11.8 530 13 528.8 12" stroke="#fff" stroke-width="1.1" fill="none"/>
 <!-- touch keyboard -->
 <rect x="542.6" y="5.2" width="14.4" height="8.6" rx="1" stroke="#fff" stroke-width="1" fill="none"/>
 <path d="M544.5 7.5H555M544.5 9.5H555M546.5 11.5H553" stroke="#fff" stroke-width="0.8" stroke-dasharray="1 0.6"/>
 <!-- action center -->
 <path d="M614.6 4.8H624.3V12.6H620.8L619.2 14.4L617.6 12.6H614.6z" fill="#fff"/>
 <path d="M616.4 6.8H622.6M616.4 8.6H622.6M616.4 10.4H620.8" stroke="#000" stroke-width="0.8"/>
 <path d="M637 0V19" stroke="#505050" stroke-width="1"/>
</svg>
<div class="t" style="left:248.3px;top:465.8px;font-size:8.6px;color:#fff;transform:scaleX(.835)">WinISD beta</div>
<div class="t" style="font-size:8.5px;left:563.8px;top:466.0px;color:#fff;transform:scaleX(0.856)">DEU</div>
<div class="t" style="font-size:8.5px;left:585.9px;top:466.0px;color:#fff;transform:scaleX(0.795)">03:58</div>


</body></html>
